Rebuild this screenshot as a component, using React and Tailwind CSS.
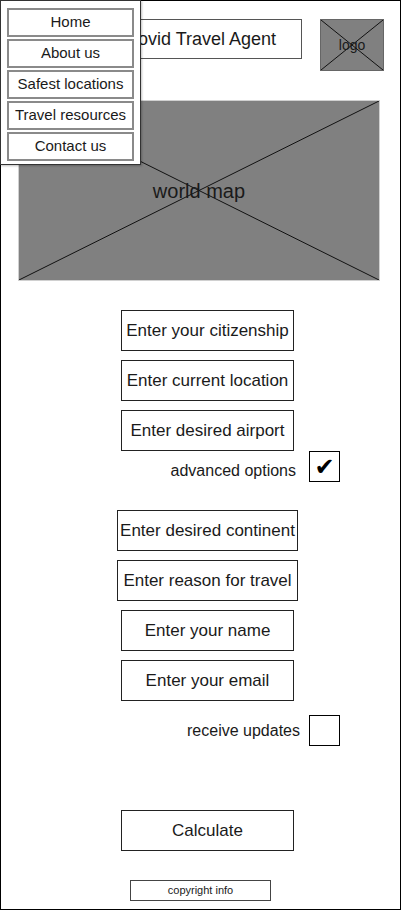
import React from 'react';

const font = { fontFamily: '"Liberation Sans", Arial, sans-serif' };

const navItems = ['Home', 'About us', 'Safest locations', 'Travel resources', 'Contact us'];

// grey placeholder with a cross through it
const Placeholder = ({ className, label, labelClass }) => (
  <div className={`relative flex items-center justify-center bg-[#808080] ${className}`}>
    <svg className="absolute inset-0 w-full h-full" preserveAspectRatio="none" viewBox="0 0 100 100">
      <line x1="0" y1="0" x2="100" y2="100" stroke="#111" strokeWidth="1" vectorEffect="non-scaling-stroke" />
      <line x1="100" y1="0" x2="0" y2="100" stroke="#111" strokeWidth="1" vectorEffect="non-scaling-stroke" />
    </svg>
    <span className={`relative text-[#1a1a1a] ${labelClass}`}>{label}</span>
  </div>
);

const Field = ({ children, wide }) => (
  <div
    className={`flex items-center justify-center h-[41px] border border-[#222] text-[17px] text-[#1a1a1a] ${
      wide ? 'w-[181px]' : 'w-[173px]'
    }`}
  >
    {children}
  </div>
);

const Toggle = ({ label, checked, labelClass = '' }) => (
  <div className="flex items-center justify-end w-full pr-[60px]">
    <span className={`text-[16px] text-[#1a1a1a] ${labelClass}`}>{label}</span>
    <div className="flex items-center justify-center w-[31px] h-[31px] border border-black">
      {checked && (
        <span className="text-[24px] leading-none text-black" style={{ fontFamily: '"DejaVu Sans", sans-serif' }}>
          ✔
        </span>
      )}
    </div>
  </div>
);

export default function App() {
  return (
    <div className="w-[401px] h-[912px] bg-white" style={font}>
      <div className="relative w-[401px] h-[910px] border border-black flex flex-col">
        {/* header */}
        <div className="flex items-start h-[99px] pt-[18px]">
          <div className="ml-[98px] w-[203px] h-[40px] border border-[#555] flex items-center justify-center text-[18px] text-[#1a1a1a]">
            Covid Travel Agent
          </div>
          <Placeholder
            className="ml-[18px] w-[64px] h-[52px] border border-[#666]"
            label="logo"
            labelClass="text-[14px]"
          />
        </div>

        {/* map */}
        <Placeholder
          className="ml-[17px] w-[362px] h-[181px] border border-[#d0d0d0]"
          label="world map"
          labelClass="text-[20px]"
        />

        {/* form */}
        <div className="flex flex-col items-center mt-[29px] pl-[14px] gap-[9px]">
          <Field>Enter your citizenship</Field>
          <Field>Enter current location</Field>
          <Field>Enter desired airport</Field>
        </div>
        <Toggle label="advanced options" labelClass="translate-y-[4px] mr-[13px]" checked />
        <div className="flex flex-col items-center mt-[28px] pl-[14px] gap-[9px]">
          <Field wide>Enter desired continent</Field>
          <Field wide>Enter reason for travel</Field>
          <Field>Enter your name</Field>
          <Field>Enter your email</Field>
        </div>
        <div className="mt-[14px]">
          <Toggle label="receive updates" labelClass="mr-[9px]" />
        </div>
        <div className="flex flex-col items-center mt-[64px] pl-[14px]">
          <Field>Calculate</Field>
        </div>
        <div className="flex justify-center mt-[29px]">
          <div className="w-[141px] h-[21px] border border-[#444] flex items-center justify-center text-[11px] text-[#1a1a1a]">
            copyright info
          </div>
        </div>

        {/* nav menu */}
        <div className="absolute -left-px -top-px w-[141px] h-[165px] bg-white border border-[#333] shadow-[1px_1px_2px_rgba(0,0,0,0.25)] px-[6px] pt-[7px] flex flex-col gap-[2px]">
          {navItems.map((item) => (
            <div
              key={item}
              className="h-[29px] border-2 border-[#8a8a8a] flex items-center justify-center text-[15px] text-[#1a1a1a]"
            >
              {item}
            </div>
          ))}
        </div>
      </div>
    </div>
  );
}
